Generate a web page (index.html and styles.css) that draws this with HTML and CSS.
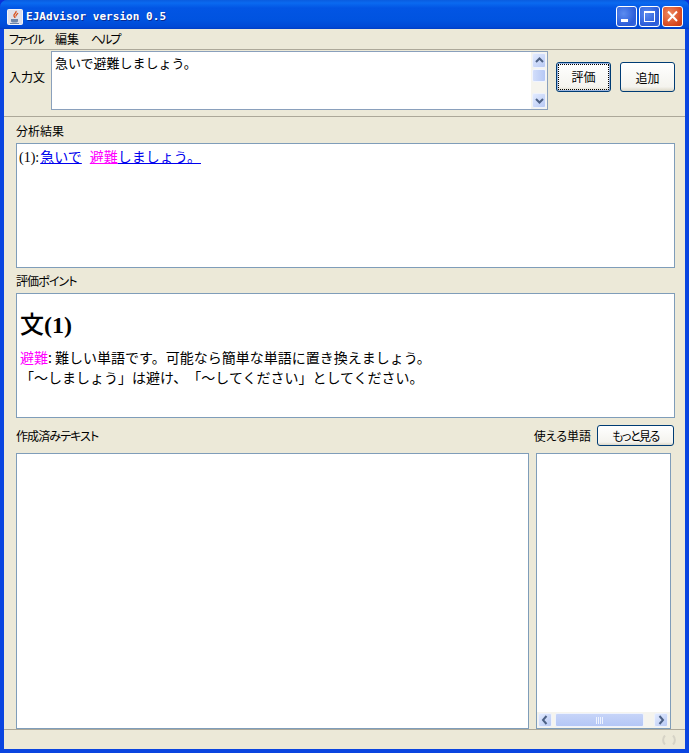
FILE: index.html
```html
<!DOCTYPE html>
<html lang="ja">
<head>
<meta charset="utf-8">
<title>EJAdvisor version 0.5</title>
<link rel="stylesheet" href="styles.css">
</head>
<body>
<div class="window">
  <header class="titlebar">
    <svg class="appicon" width="16" height="16" viewBox="0 0 16 16">
      <rect x="0.5" y="0.5" width="15" height="15" rx="1" fill="#dfe0ea" stroke="#f4f4f8"/>
      <path d="M9 2c1 2-3 3-2 5 .3.8 1 1.200 1 2M11 4c-1 1.500-2.500 1.500-2 3.500" fill="none" stroke="#d8501c" stroke-width="1.300"/>
      <path d="M4 10h7v2c0 1-1 1.500-3.500 1.500S4 13 4 12z" fill="#6f86a8"/>
      <path d="M3 14.500h9" stroke="#6f86a8"/>
    </svg>
    <span class="title-text">EJAdvisor version 0.5</span>
    <div class="wincontrols">
      <span class="winbtn"><svg width="21" height="21" viewBox="0 0 21 21"><rect x="5" y="13" width="7" height="3" fill="#fff"/></svg></span>
      <span class="winbtn"><svg width="21" height="21" viewBox="0 0 21 21"><rect x="5.500" y="5.500" width="10" height="10" fill="none" stroke="#fff"/><rect x="5" y="5" width="11" height="2" fill="#fff"/></svg></span>
      <span class="winbtn close"><svg width="21" height="21" viewBox="0 0 21 21"><path d="M6 5.500l9 9.500M15 5.500l-9 9.500" stroke="#fff" stroke-width="2"/></svg></span>
    </div>
  </header>
  <div class="client">
    <nav class="menubar"><span class="m1">ファイル</span><span class="m2">編集</span><span class="m3">ヘルプ</span></nav>
    <section class="inputrow">
      <label class="inputlabel">入力文</label>
      <div class="inputbox">
        <div class="inputtext">急いで避難しましょう。</div>
        <div class="vscroll">
          <span class="sbtn"><svg width="13" height="13" viewBox="0 0 13 13"><path d="M3 8l3.500-3.500L10 8" fill="none" stroke="#4d6185" stroke-width="2"/></svg></span>
          <span class="vthumb"></span>
          <span class="vspace"></span>
          <span class="sbtn"><svg width="13" height="13" viewBox="0 0 13 13"><path d="M3 5l3.500 3.500L10 5" fill="none" stroke="#4d6185" stroke-width="2"/></svg></span>
        </div>
      </div>
      <button class="btn focused"><span>評価</span></button>
      <button class="btn"><span>追加</span></button>
    </section>
    <main class="content">
      <div class="label first">分析結果</div>
      <div class="box analysis">(1):<a class="lnk first-link">急いで</a><a class="lnk pink">避難</a><a class="lnk last-link">しましょう。</a></div>
      <div class="label second tight">評価ポイント</div>
      <div class="box points">
        <h2><span class="h2kanji">文</span>(1)</h2>
        <p><span class="pinktext">避難</span>: 難しい単語です。可能なら簡単な単語に置き換えましょう。<br>「～しましょう」は避け、「～してください」としてください。</p>
      </div>
      <div class="labelrow">
        <div class="label tight">作成済みテキスト</div>
        <div class="wordhead"><span class="label">使える単語</span><button class="btn small"><span>もっと見る</span></button></div>
      </div>
      <div class="bottomrow">
        <div class="box textbox"></div>
        <div class="box wordbox">
          <div class="hscroll">
            <span class="sbtn"><svg width="14" height="14" viewBox="0 0 14 14"><path d="M8.500 3L5 7l3.500 4" fill="none" stroke="#4d6185" stroke-width="2"/></svg></span>
            <span class="hthumb"><svg width="8" height="7" viewBox="0 0 8 7"><path d="M.5 0v7M2.500 0v7M4.500 0v7M6.500 0v7" stroke="#eef3ff"/></svg></span>
            <span class="sbtn"><svg width="14" height="14" viewBox="0 0 14 14"><path d="M5.500 3L9 7l-3.500 4" fill="none" stroke="#4d6185" stroke-width="2"/></svg></span>
          </div>
        </div>
      </div>
    </main>
    <footer class="status">
      <svg class="grip" width="16" height="10" viewBox="0 0 16 10"><path d="M4 .5C1.500 3 1.500 7 4 9.500M12 .5c2.500 2.500 2.500 6.500 0 9" fill="none" stroke="#d6d3c6" stroke-width="2"/></svg>
    </footer>
  </div>
</div>
</body>
</html>
```
FILE: styles.css
```css
* { box-sizing: border-box; }
html, body { margin: 0; height: 100%; }
body { font-family: "Noto Sans CJK JP", sans-serif; font-size: 12px; color: #000; background: #0831d9; }
.window {
  width: 689px; height: 753px; display: flex; flex-direction: column;
  background: #0a45e0; border-radius: 7px 7px 0 0; overflow: hidden;
}
.titlebar {
  height: 29px; flex: none; display: flex; align-items: center; padding: 4px 6px 0 7px;
  background: linear-gradient(#0a5ce0 0, #0a6af0 3px, #0255e4 8px, #0053e0 20px, #0049d6 27px, #003dc4 29px);
}
.appicon { flex: none; }
.title-text {
  margin-left: 3px; color: #fff; font: bold 11px/1 "DejaVu Sans Mono", monospace;
  text-shadow: 1px 1px 0 #0a2a90; white-space: pre; letter-spacing: 0.05px;
}
.wincontrols { margin-left: auto; display: flex; gap: 2px; }
.winbtn {
  width: 21px; height: 21px; display: block; border: 1px solid #fff; border-radius: 3px;
  background: radial-gradient(circle at 35% 35%, #5b8cf0, #2a5bd8 70%, #3c6ce0);
}
.winbtn svg { display: block; margin: -1px; }
.winbtn.close { background: radial-gradient(circle at 35% 35%, #ee8a62, #d8481f 70%, #c23a18); }
.client {
  flex: 1; min-height: 0; margin: 0 4px 4px; background: #ece9d8; display: flex; flex-direction: column;
}
.menubar {
  height: 21px; flex: none; display: flex; align-items: center; padding: 0 0 0 5px;
  border-bottom: 1px solid #aca899; font-feature-settings: "palt";
}
.menubar span { line-height: 20px; font-size: 12px; white-space: nowrap; }
.menubar .m1 { width: 46px; letter-spacing: -2px; }
.menubar .m2 { width: 36px; }
.menubar .m3 { letter-spacing: -2px; }
.inputrow {
  height: 67px; flex: none; display: flex; align-items: flex-start; padding: 1px 0 0 5px;
  border-bottom: 1px solid #aca899;
}
.inputlabel { margin-top: 17px; line-height: 18px; width: 42px; flex: none; }
.inputbox {
  width: 497px; height: 59px; flex: none; background: #fff; border: 1px solid #8aa0bc; display: flex;
}
.inputtext { flex: 1; padding: 1px 3px 0; line-height: 20px; font-size: 13px; text-spacing-trim: space-all; }
.vscroll { width: 16px; flex: none; display: flex; flex-direction: column; align-items: center; padding: 1px 0; background: #f5f4ee; }
.sbtn {
  width: 14px; height: 15px; flex: none; display: flex; align-items: center; justify-content: center;
  background: linear-gradient(135deg, #e2ebff, #b8c9f4); border: 1px solid #eef2fc; border-radius: 2px;
}
.sbtn svg { flex: none; }
.vthumb { width: 14px; height: 13px; margin-top: 1px; background: linear-gradient(90deg, #d2defa, #b6c8f6); border: 1px solid #f0f4ff; border-radius: 2px; flex: none; }
.vspace { flex: 1; }
.btn {
  font: 12px "Noto Sans CJK JP", sans-serif; color: #000; padding: 0; flex: none;
  width: 55px; height: 30px; border: 1px solid #003c74; border-radius: 3px;
  background: linear-gradient(#fff, #f4f3ee 85%, #dcd8c8);
}
.inputrow .btn { margin: 11px 0 0 9px; }
.inputrow .btn.focused { margin-left: 8px; box-shadow: inset 0 0 0 1px #9db6e0; }
.btn.focused span { display: block; margin: 1px; height: 26px; line-height: 24px; border: 1px dotted #000; }
.content { flex: 1; min-height: 0; display: flex; flex-direction: column; padding: 0 10px 0 12px; }
.label { line-height: 14px; font-size: 12px; font-feature-settings: "palt"; }
.label.tight { letter-spacing: -0.9px; }
.label.first { margin-top: 7px; height: 19px; }
.label.second { margin-top: 6px; height: 19px; }
.box { background: #fff; border: 1px solid #7f9db9; flex: none; }
.analysis {
  height: 125px; padding: 3px 2px; font: 14px/18px "Liberation Serif", "Noto Sans CJK JP", serif; white-space: pre;
}
.analysis .lnk { font-family: "Noto Sans CJK JP", sans-serif; font-size: 14px; color: #0000ee; text-decoration: underline; text-spacing-trim: space-all; }
.analysis .first-link { margin-left: 1px; padding-right: 1px; }
.analysis .last-link { padding-right: 2px; }
.analysis .lnk.pink { color: #ff00ff; margin-left: 7px; }
.points { height: 125px; padding: 0 4px 0 3px; }
.points h2 { margin: 14px 0 0; font: bold 24px/30px "Liberation Serif", "Noto Sans CJK JP", serif; }
.h2kanji { font-family: "Noto Sans CJK JP", sans-serif; font-weight: 500; }
.points p { margin: 7px 0 0; font-size: 14px; line-height: 20px; text-spacing-trim: space-all; }
.pinktext { color: #ff00ff; }
.labelrow { height: 35px; flex: none; display: flex; justify-content: space-between; align-items: center; padding: 0 1px 0 0; }
.wordhead { display: flex; align-items: center; gap: 6px; }
.btn.small { width: 77px; height: 21px; font-size: 12px; font-feature-settings: "palt"; letter-spacing: -1.5px; }
.bottomrow { flex: 1; min-height: 0; display: flex; gap: 7px; }
.textbox { width: 513px; height: 276px; }
.wordbox { width: 135px; height: 276px; display: flex; flex-direction: column; justify-content: flex-end; }
.hscroll { height: 16px; display: flex; align-items: center; padding: 0 2px 0 1px; background: #f5f4ee; }
.hscroll .sbtn { height: 14px; }
.hthumb {
  width: 89px; height: 14px; flex: none; margin: 0 10px 0 3px; display: flex; align-items: center; justify-content: center;
  background: linear-gradient(#c6d4f8, #b4c7f6); border: 1px solid #eef2fc; border-radius: 2px;
}
.status { height: 20px; flex: none; border-top: 1px solid #aca899; display: flex; justify-content: flex-end; align-items: center; padding-right: 8px; }
.grip { flex: none; }
```
